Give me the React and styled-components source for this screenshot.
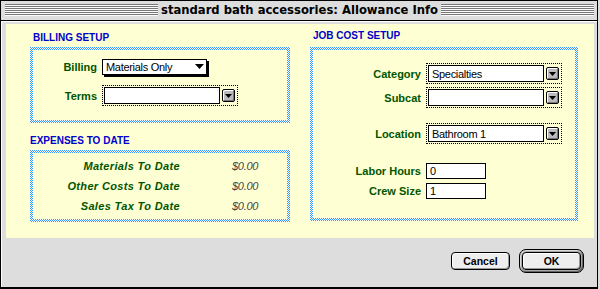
import React from 'react';
import styled, { createGlobalStyle } from 'styled-components';

const Global = createGlobalStyle`
  html, body { margin: 0; padding: 0; background: #dddddd; }
  body { width: 600px; height: 289px; overflow: hidden; }
  * { box-sizing: border-box; }
`;

const YELLOW = '#ffffd4';
const GREEN = '#005500';
const CHECKER =
  "url(\"data:image/svg+xml,%3Csvg xmlns='http://www.w3.org/2000/svg' width='2' height='2' shape-rendering='crispEdges'%3E%3Crect width='2' height='2' fill='%23ffffff'/%3E%3Crect width='1' height='1' fill='%233399ff'/%3E%3Crect x='1' y='1' width='1' height='1' fill='%233399ff'/%3E%3C/svg%3E\")";

const Window = styled.div`
  width: 598px;
  height: 289px;
  border: 1px solid #000;
  border-bottom-width: 2px;
  background: #dddddd;
  display: flex;
  flex-direction: column;
`;

const TitleBar = styled.div`
  height: 20px;
  flex: none;
  border-bottom: 1px solid #000;
  background: #dddddd;
  display: flex;
  align-items: center;
  gap: 3px;
  padding: 0 3px 1px 4px;
`;

const Stripes = styled.div`
  flex: 1;
  height: 12px;
  background: repeating-linear-gradient(to bottom, #777 0 1px, #fbfbfb 1px 2px);
`;

const Title = styled.div`
  font-family: 'DejaVu Sans', sans-serif;
  font-weight: bold;
  font-size: 11.6px;
  line-height: 14px;
  color: #000;
  white-space: nowrap;
`;

const Body = styled.div`
  flex: 1;
  display: flex;
  flex-direction: column;
  padding: 3px 3px 0 5px;
  box-shadow: inset 1px 1px 0 #fff;
`;

const Panel = styled.div`
  height: 214px;
  flex: none;
  background: ${YELLOW};
  display: grid;
  grid-template-columns: 260px 268px;
  column-gap: 20px;
  padding-left: 24px;
  align-items: start;
`;

const Column = styled.div`
  display: flex;
  flex-direction: column;
  padding-top: ${(p) => p.$top}px;
`;

const Header = styled.div`
  font-family: 'Liberation Sans', Arial, sans-serif;
  font-weight: bold;
  font-size: 10px;
  line-height: 12px;
  color: #0000cc;
  padding-left: ${(p) => p.$indent || 0}px;
  margin-top: ${(p) => p.$mt || 0}px;
  margin-bottom: ${(p) => p.$mb}px;
`;

const Box = styled.div`
  height: ${(p) => p.$h}px;
  border: 3px solid transparent;
  background:
    linear-gradient(${YELLOW}, ${YELLOW}) padding-box,
    ${CHECKER} 0 0 / 2px 2px repeat border-box;
  background-origin: padding-box, border-box;
  display: flex;
  flex-direction: column;
`;

const FieldRow = styled.div`
  display: grid;
  grid-template-columns: ${(p) => p.$label}px auto;
  column-gap: 5px;
  align-items: center;
  justify-items: start;
  height: ${(p) => p.$h}px;
  margin-top: ${(p) => p.$mt}px;
`;

const Label = styled.div`
  justify-self: end;
  font-family: 'Liberation Sans', Arial, sans-serif;
  font-weight: bold;
  font-size: 11px;
  color: ${GREEN};
  white-space: nowrap;
`;

const fieldFont = `
  font-family: 'Liberation Sans', Arial, sans-serif;
  font-size: 11px;
  letter-spacing: -0.3px;
  color: #000;
`;

const Popup = styled.div`
  width: 105px;
  height: 16px;
  border: 1px solid #000;
  background: #fff;
  box-shadow: 2px 2px 0 #000;
  display: flex;
  align-items: center;
  justify-content: space-between;
  padding: 0 2px 0 3px;
  ${fieldFont}
`;

const Combo = styled.div`
  width: 136px;
  height: 21px;
  border: 1px dotted #000;
  padding: 1px 2px 1px 1px;
  display: flex;
  align-items: center;
  gap: 2px;
`;

const ComboField = styled.div`
  width: 116px;
  height: 17px;
  border: 1px solid #000;
  background: #fff;
  padding-left: 3px;
  display: flex;
  align-items: center;
  ${fieldFont}
`;

const ComboButton = styled.div`
  width: 13px;
  height: 13px;
  border: 1px solid #000;
  border-radius: 2px;
  background: #bbbbbb;
  box-shadow: inset 1px 1px 0 #fff, inset -1px -1px 0 #777;
  display: flex;
  align-items: center;
  justify-content: center;
`;

const TextField = styled.div`
  width: 60px;
  height: 16px;
  border: 1px solid #000;
  background: #fff;
  padding-left: 3px;
  display: flex;
  align-items: center;
  ${fieldFont}
`;

const ExpenseRow = styled.div`
  display: grid;
  grid-template-columns: 147px 1fr;
  column-gap: 52px;
  align-items: center;
  height: 20px;
  margin-top: ${(p) => p.$mt || 0}px;
`;

const ExpenseLabel = styled.div`
  justify-self: end;
  font-family: 'Liberation Sans', Arial, sans-serif;
  font-weight: bold;
  font-style: italic;
  font-size: 11px;
  letter-spacing: 0.35px;
  color: ${GREEN};
  white-space: nowrap;
`;

const Amount = styled.div`
  font-family: 'Liberation Sans', Arial, sans-serif;
  font-style: italic;
  font-size: 11px;
  letter-spacing: -0.3px;
  color: #444;
`;

const Footer = styled.div`
  flex: 1;
  display: flex;
  justify-content: flex-end;
  align-items: center;
  gap: 9px;
  padding: 0 10px 3px 0;
`;

const Button = styled.div`
  width: 59px;
  height: 18px;
  border: 1px solid #000;
  border-radius: 4px;
  background: #eeeeee;
  box-shadow: inset 1px 1px 0 #fff, inset -1px -1px 0 #999;
  display: flex;
  align-items: center;
  justify-content: center;
  font-family: 'Liberation Sans', Arial, sans-serif;
  font-weight: bold;
  font-size: 10.5px;
  color: #000;
`;

const DefaultRing = styled.div`
  width: 65px;
  height: 24px;
  border: 1px solid #000;
  border-radius: 7px;
  padding: 2px;
  background: #a8a8a8;
  box-shadow: inset 1px 1px 0 #dcdcdc, inset -1px -1px 0 #666;
`;

const Arrow = ({ w = 9, h = 5 }) => (
  <svg width={w} height={h} viewBox={`0 0 ${w} ${h}`}>
    <polygon points={`0,0 ${w},0 ${w / 2},${h}`} fill="#000" />
  </svg>
);

const ComboBox = ({ value }) => (
  <Combo>
    <ComboField>{value}</ComboField>
    <ComboButton>
      <Arrow w={7} h={4} />
    </ComboButton>
  </Combo>
);

export default function App() {
  return (
    <>
      <Global />
      <Window>
        <TitleBar>
          <Stripes />
          <Title>standard bath accessories: Allowance Info</Title>
          <Stripes />
        </TitleBar>
        <Body>
          <Panel>
            <Column $top={8}>
              <Header $indent={3} $mb={3}>BILLING SETUP</Header>
              <Box $h={76}>
                <FieldRow $label={64} $h={21} $mt={6}>
                  <Label>Billing</Label>
                  <Popup>
                    <span>Materials Only</span>
                    <Arrow />
                  </Popup>
                </FieldRow>
                <FieldRow $label={64} $h={21} $mt={8}>
                  <Label>Terms</Label>
                  <ComboBox value="" />
                </FieldRow>
              </Box>
              <Header $mt={12} $mb={3}>EXPENSES TO DATE</Header>
              <Box $h={72}>
                <ExpenseRow $mt={3}>
                  <ExpenseLabel>Materials To Date</ExpenseLabel>
                  <Amount>$0.00</Amount>
                </ExpenseRow>
                <ExpenseRow>
                  <ExpenseLabel>Other Costs To Date</ExpenseLabel>
                  <Amount>$0.00</Amount>
                </ExpenseRow>
                <ExpenseRow>
                  <ExpenseLabel>Sales Tax To Date</ExpenseLabel>
                  <Amount>$0.00</Amount>
                </ExpenseRow>
              </Box>
            </Column>
            <Column $top={6}>
              <Header $indent={3} $mb={5}>JOB COST SETUP</Header>
              <Box $h={174}>
                <FieldRow $label={108} $h={21} $mt={13}>
                  <Label>Category</Label>
                  <ComboBox value="Specialties" />
                </FieldRow>
                <FieldRow $label={108} $h={21} $mt={3}>
                  <Label>Subcat</Label>
                  <ComboBox value="" />
                </FieldRow>
                <FieldRow $label={108} $h={21} $mt={15}>
                  <Label>Location</Label>
                  <ComboBox value="Bathroom 1" />
                </FieldRow>
                <FieldRow $label={108} $h={16} $mt={19}>
                  <Label>Labor Hours</Label>
                  <TextField>0</TextField>
                </FieldRow>
                <FieldRow $label={108} $h={16} $mt={4}>
                  <Label>Crew Size</Label>
                  <TextField>1</TextField>
                </FieldRow>
              </Box>
            </Column>
          </Panel>
          <Footer>
            <Button>Cancel</Button>
            <DefaultRing>
              <Button>OK</Button>
            </DefaultRing>
          </Footer>
        </Body>
      </Window>
    </>
  );
}
